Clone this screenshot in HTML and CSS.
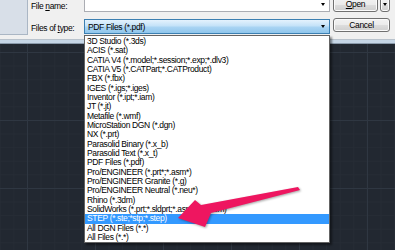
FILE: index.html
```html
<!DOCTYPE html>
<html>
<head>
<meta charset="utf-8">
<link rel="stylesheet" href="styles.css">
</head>
<body>
<div class="screen">
  <div class="dialog">
    <div class="places"></div>
    <div class="form">
      <div class="row row-name">
        <span class="lbl">File <u>n</u>ame:</span>
        <div class="combo"><span class="text"></span><span class="caret"></span></div>
        <div class="btn open"><u>O</u>pen</div>
        <div class="btn split"><span class="caret"></span></div>
      </div>
      <div class="row row-type">
        <span class="lbl">Files of <u>t</u>ype:</span>
        <div class="combo active"><span class="text">PDF Files (*.pdf)</span><span class="caret"></span></div>
        <div class="btn cancel">Cancel</div>
      </div>
    </div>
  </div>
  <div class="strip"></div>

  <ul class="list">
    <li>3D Studio (*.3ds)</li>
    <li>ACIS (*.sat)</li>
    <li>CATIA V4 (*.model;*.session;*.exp;*.dlv3)</li>
    <li>CATIA V5 (*.CATPart;*.CATProduct)</li>
    <li>FBX (*.fbx)</li>
    <li>IGES (*.igs;*.iges)</li>
    <li>Inventor (*.ipt;*.iam)</li>
    <li>JT (*.jt)</li>
    <li>Metafile (*.wmf)</li>
    <li>MicroStation DGN (*.dgn)</li>
    <li>NX (*.prt)</li>
    <li>Parasolid Binary (*.x_b)</li>
    <li>Parasolid Text (*.x_t)</li>
    <li>PDF Files (*.pdf)</li>
    <li>Pro/ENGINEER (*.prt*;*.asm*)</li>
    <li>Pro/ENGINEER Granite (*.g)</li>
    <li>Pro/ENGINEER Neutral (*.neu*)</li>
    <li>Rhino (*.3dm)</li>
    <li>SolidWorks (*.prt;*.sldprt;*.asm;*.sldasm)</li>
    <li class="sel">STEP (*.ste;*stp;*.step)</li>
    <li>All DGN Files (*.*)</li>
    <li>All Files (*.*)</li>
  </ul>

  <svg class="arrow" width="395" height="250" viewBox="0 0 395 250">
    <polygon points="178,218 195,200 201,205 298,187 300,190 211,213 205,227" fill="#ee1660"/>
  </svg>
</div>
</body>
</html>
```

FILE: styles.css
```css
* { box-sizing: border-box; }
html, body { margin: 0; padding: 0; }
body {
  width: 395px;
  height: 250px;
  overflow: hidden;
  font-family: "Liberation Sans", Arial, sans-serif;
  font-size: 8.5px;
  letter-spacing: -0.35px;
  color: #000;
}
.screen {
  position: relative;
  width: 395px;
  height: 250px;
  overflow: hidden;
  background-color: #222831;
  background-image:
    linear-gradient(to right, #2f3742 1px, transparent 1px),
    linear-gradient(to bottom, #2f3742 1px, transparent 1px),
    linear-gradient(to right, #262c35 1px, transparent 1px),
    linear-gradient(to bottom, #262c35 1px, transparent 1px);
  background-size: 68px 68px, 68px 68px, 13.6px 13.6px, 13.6px 13.6px;
  background-position: 27px 52px, 27px 52px, 27px 52px, 27px 52px;
}
.dialog {
  display: flex;
  margin-top: -4px;
  height: 44px;
  background: #f0f0f0;
  border-bottom: 1px solid #b9c3cd;
}
.places {
  width: 28px;
  height: 39px;
  background: #d8dfe8;
  border-right: 1px solid #aab6c4;
  border-bottom: 1px solid #aab6c4;
}
.form {
  display: flex;
  flex-direction: column;
  gap: 7px;
  padding-left: 3px;
}
.row {
  display: flex;
  align-items: center;
  height: 16px;
}
.row-type { height: 15px; }
.lbl {
  width: 53px;
  padding-top: 3px;
  white-space: nowrap;
}
.combo {
  position: relative;
  display: flex;
  align-items: center;
  width: 246px;
  height: 100%;
  background: #fff;
  border: 1px solid #abadb3;
  padding-left: 3px;
}
.combo .text { flex: 1; }
.combo .caret { margin-right: 4px; }
.combo.active {
  background: linear-gradient(#e4f2fd 0%, #c4e2f8 45%, #a9d4f3 55%, #90c6ec 100%);
  border-color: #3c7fb1;
}
.caret {
  width: 0;
  height: 0;
  border-left: 2.5px solid transparent;
  border-right: 2.5px solid transparent;
  border-top: 3px solid #000;
}
.btn {
  display: flex;
  align-items: center;
  justify-content: center;
  height: 15px;
  border: 1px solid #707070;
  border-radius: 3px;
  background: linear-gradient(#f2f2f2 0%, #ebebeb 50%, #dddddd 51%, #cfcfcf 100%);
  box-shadow: inset 0 0 0 1px #fbfbfb;
}
.open { width: 45px; margin-left: 3px; }
.split { width: 10px; margin-left: 2px; }
.cancel { width: 57px; margin-left: 3px; height: 14px; align-self: flex-start; margin-top: -1px; }
.strip {
  height: 4px;
  background: #c6d6e6;
  border-bottom: 1px solid #8a9aab;
}
.list {
  position: absolute;
  left: 84px;
  top: 35px;
  width: 246px;
  height: 208px;
  margin: 0;
  padding: 1px 0 0 0;
  list-style: none;
  background: #fff;
  border: 1px solid #646464;
  box-shadow: 2px 2px 2px rgba(0, 0, 0, 0.45);
}
.list li {
  height: 9.33px;
  line-height: 9.33px;
  padding-left: 2px;
  white-space: nowrap;
  overflow: hidden;
}
.list li.sel {
  background: #3399ff;
  color: #fff;
}
.arrow {
  position: absolute;
  left: 0;
  top: 0;
  filter: drop-shadow(1px 1px 1px rgba(0, 0, 0, 0.35));
}
```
